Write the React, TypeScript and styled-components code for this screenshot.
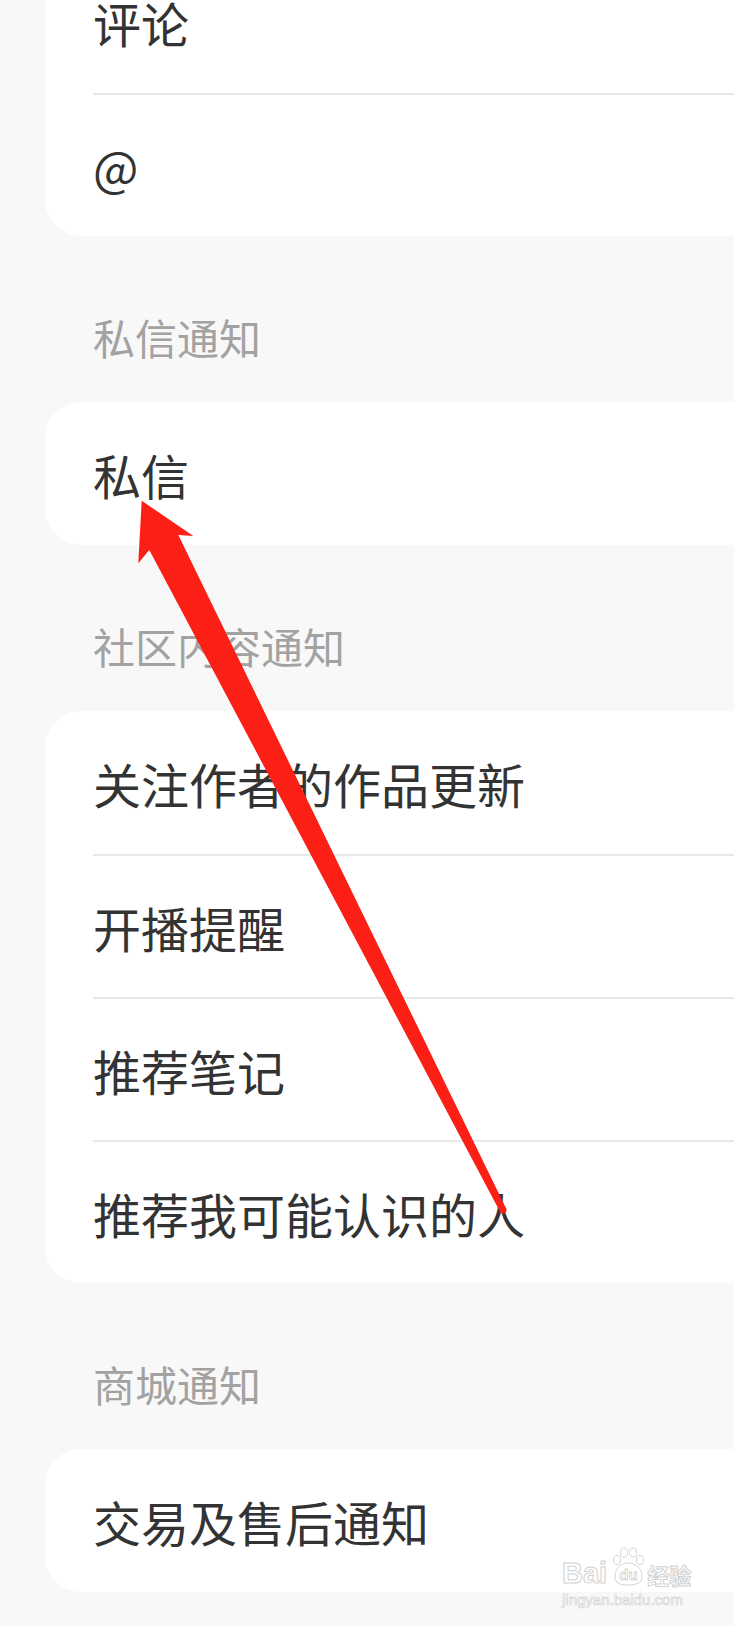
import styled, { createGlobalStyle } from "styled-components";

const GlobalStyle = createGlobalStyle`
  html, body {
    margin: 0;
    padding: 0;
    background: #f8f8f8;
    overflow: hidden;
  }
  * {
    box-sizing: border-box;
  }
`;

type Section = {
  title?: string;
  items: string[];
};

const sections: Section[] = [
  { items: ["评论", "@"] },
  { title: "私信通知", items: ["私信"] },
  { title: "社区内容通知", items: ["关注作者的作品更新", "开播提醒", "推荐笔记", "推荐我可能认识的人"] },
  { title: "商城通知", items: ["交易及售后通知"] },
];

export default function App() {
  return (
    <>
      <GlobalStyle />
      <Page>
        <List>
          {sections.map((section, i) => (
            <div key={i}>
              {section.title && <SectionTitle>{section.title}</SectionTitle>}
              <Card $first={i === 0}>
                {section.items.map((item) => (
                  <Row key={item}>{item}</Row>
                ))}
              </Card>
            </div>
          ))}
        </List>
        <Arrow />
        <Watermark />
      </Page>
    </>
  );
}

function Arrow() {
  return (
    <Overlay viewBox="0 0 734 1626" width={734} height={1626}>
      <polygon
        points="141.7,500.7 193.3,536 178.3,535 506.1,1208.4 499.9,1211.6 149.3,550 138.3,563.3"
        fill="#fc1f16"
      />
      <circle cx={503} cy={1210} r={3.5} fill="#fc1f16" />
    </Overlay>
  );
}

function Watermark() {
  return (
    <MarkBox>
      <MarkTop>
        <MarkLatin>Bai</MarkLatin>
        <Paw viewBox="0 0 40 40" width={40} height={40}>
          <g fill="#fff" stroke="#d4d4d4" strokeWidth={1}>
            <ellipse cx={9} cy={13} rx={3.5} ry={4.5} />
            <ellipse cx={16} cy={5.5} rx={3.5} ry={4.5} />
            <ellipse cx={25} cy={5.5} rx={3.5} ry={4.5} />
            <ellipse cx={32} cy={13} rx={3.5} ry={4.5} />
            <path d="M7 30 C7 20 14 16 20 16 C26 16 34 20 34 30 C34 36 28 38 20 38 C12 38 7 36 7 30 Z" />
          </g>
          <text
            x={20.5}
            y={33}
            textAnchor="middle"
            fontFamily="Liberation Sans, sans-serif"
            fontWeight={700}
            fontSize={15}
            fill="#fff"
            stroke="#d0d0d0"
            strokeWidth={0.8}
          >
            du
          </text>
        </Paw>
        <MarkCjk>经验</MarkCjk>
      </MarkTop>
      <MarkUrl>jingyan.baidu.com</MarkUrl>
    </MarkBox>
  );
}

const Page = styled.div`
  position: relative;
  width: 734px;
  height: 1626px;
  overflow: hidden;
  background: #f8f8f8;
  font-family: "Noto Sans CJK SC", "Noto Sans", sans-serif;
`;

const List = styled.div`
  display: flex;
  flex-direction: column;
  padding-left: 45px;
`;

const SectionTitle = styled.div`
  padding: 80px 0 44px 48px;
  height: 166px;
  font-size: 42px;
  line-height: 42px;
  color: #a2a2a2;
`;

const Card = styled.div<{ $first?: boolean }>`
  margin-top: ${(props) => (props.$first ? "-50px" : "0")};
  margin-right: -40px;
  padding-left: 48px;
  background: #ffffff;
  border-radius: 36px;
  display: flex;
  flex-direction: column;
`;

const Row = styled.div`
  height: 143px;
  display: flex;
  align-items: center;
  font-size: 48px;
  color: #333333;

  & + & {
    border-top: 2px solid #e8e8e8;
  }
`;

const Overlay = styled.svg`
  position: absolute;
  top: 0;
  left: 0;
  pointer-events: none;
`;

const MarkBox = styled.div`
  position: absolute;
  left: 562px;
  top: 1545px;
  display: flex;
  flex-direction: column;
  align-items: flex-start;
  pointer-events: none;
`;

const MarkTop = styled.div`
  display: flex;
  align-items: flex-end;
  height: 42px;
`;

const MarkLatin = styled.span`
  font-family: "Liberation Sans", sans-serif;
  font-weight: 700;
  font-size: 29px;
  line-height: 28px;
  color: #fff;
  -webkit-text-stroke: 1px #d2d2d2;
`;

const Paw = styled.svg`
  display: block;
  margin: 0 -1px 0 1px;
`;

const MarkCjk = styled.span`
  font-family: "Noto Sans CJK SC", sans-serif;
  font-weight: 700;
  font-size: 22px;
  line-height: 26px;
  color: #fff;
  -webkit-text-stroke: 1px #d2d2d2;
`;

const MarkUrl = styled.span`
  margin-top: 6px;
  font-family: "Liberation Sans", sans-serif;
  font-size: 15px;
  line-height: 14px;
  color: #fff;
  -webkit-text-stroke: 0.7px #d4d4d4;
`;
